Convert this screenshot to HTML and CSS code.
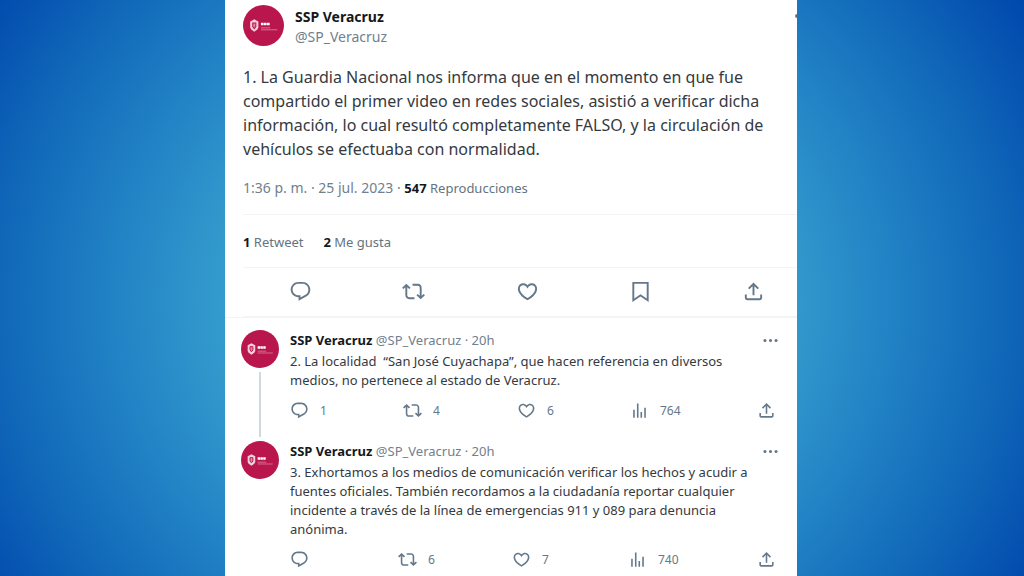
FILE: index.html
```html
<!DOCTYPE html>
<html lang="es">
<head>
<meta charset="utf-8">
<title>SSP Veracruz</title>
<link rel="stylesheet" href="styles.css">
</head>
<body>
<svg class="sprite" aria-hidden="true">
  <symbol id="reply" viewBox="0 0 24 24"><path d="M1.751 10c0-4.42 3.584-8 8.005-8h4.366c4.49 0 8.129 3.64 8.129 8.13 0 2.96-1.607 5.68-4.196 7.11l-8.054 4.46v-3.69h-.067c-4.49.1-8.183-3.51-8.183-8.01zm8.005-6c-3.317 0-6.005 2.69-6.005 6 0 3.37 2.77 6.08 6.138 6.01l.351-.01h1.761v2.3l5.087-2.81c1.951-1.08 3.163-3.13 3.163-5.36 0-3.39-2.744-6.13-6.129-6.13H9.756z"/></symbol>
  <symbol id="retweet" viewBox="0 0 24 24"><path d="M4.5 3.88l4.432 4.14-1.364 1.46L5.5 7.55V16c0 1.1.896 2 2 2H13v2H7.5c-2.209 0-4-1.79-4-4V7.55L1.432 9.48.068 8.02 4.5 3.88zM16.5 6H11V4h5.5c2.209 0 4 1.79 4 4v8.45l2.068-1.93 1.364 1.46-4.432 4.14-4.432-4.14 1.364-1.46 2.068 1.93V8c0-1.1-.896-2-2-2z"/></symbol>
  <symbol id="like" viewBox="0 0 24 24"><path d="M16.697 5.5c-1.222-.06-2.679.51-3.89 2.16l-.805 1.09-.806-1.09C9.984 6.01 8.526 5.44 7.304 5.5c-1.243.07-2.349.78-2.91 1.91-.552 1.12-.633 2.78.479 4.82 1.074 1.97 3.257 4.27 7.129 6.61 3.87-2.34 6.052-4.64 7.126-6.61 1.111-2.04 1.03-3.7.477-4.82-.561-1.13-1.666-1.84-2.908-1.91zm4.187 7.69c-1.351 2.48-4.001 5.12-8.379 7.67l-.503.3-.504-.3c-4.379-2.55-7.029-5.19-8.382-7.67-1.36-2.5-1.41-4.86-.514-6.67.887-1.79 2.647-2.91 4.601-3.01 1.651-.09 3.368.56 4.798 2.01 1.429-1.45 3.146-2.1 4.796-2.01 1.954.1 3.714 1.22 4.601 3.01.896 1.81.846 4.17-.514 6.67z"/></symbol>
  <symbol id="views" viewBox="0 0 24 24"><path d="M8.75 21V3h2v18h-2zM18 21V8.5h2V21h-2zM4 21l.004-10h2L6 21H4zm9.248 0v-7h2v7h-2z"/></symbol>
  <symbol id="bookmark" viewBox="0 0 24 24"><path d="M3.500 2h17v20.940l-8.500-5.710-8.500 5.710zM5.500 4v15.200l6.500-4.430 6.500 4.430V4z"/></symbol>
  <symbol id="share" viewBox="0 0 24 24"><path d="M12 2.590l5.700 5.700-1.410 1.420L13 6.410V16h-2V6.410l-3.300 3.300-1.410-1.420L12 2.590zM21 15l-.02 3.510c0 1.380-1.120 2.490-2.500 2.490H5.500C4.110 21 3 19.880 3 18.500V15h2v3.500c0 .28.22.5.5.5h12.980c.28 0 .5-.22.5-.5L19 15h2z"/></symbol>
  <symbol id="more" viewBox="0 0 24 24"><path d="M3 12c0-1.100.9-2 2-2s2 .9 2 2-.9 2-2 2-2-.9-2-2zm9 2c1.100 0 2-.9 2-2s-.9-2-2-2-2 .9-2 2 .9 2 2 2zm7 0c1.100 0 2-.9 2-2s-.9-2-2-2-2 .9-2 2 .9 2 2 2z"/></symbol>
  <symbol id="avatar" viewBox="0 0 40 40">
    <circle cx="20" cy="20" r="20" fill="#b9164e"/>
    <path d="M7 16l2-1 2-1 2 1 2 1v6l-1 2-3 2-3-2-1-2z" fill="#f3cfdb"/>
    <path d="M9.500 17.500h3v3.500l-1.500 2-1.500-2z" fill="#dd86a4" stroke="#b9164e"/>
    <path d="M17.500 18.500h8.500" stroke="#fff" stroke-width="2.600" stroke-dasharray="2.600 .35"/>
    <path d="M17.500 22.300h9M17.500 24.200h16" stroke="#d9799a" stroke-width=".9"/>
  </symbol>
</svg>
<main class="panel">
  <article class="main-tweet">
    <header class="author">
      <svg class="avatar-large" role="img" aria-label="SSP Veracruz"><use href="#avatar"/></svg>
      <div class="author-names">
        <a class="name" href="#perfil">SSP Veracruz</a>
        <a class="handle" href="#perfil">@SP_Veracruz</a>
      </div>
      <button class="more-cut" aria-label="Más opciones"><span class="dot"></span></button>
    </header>
    <p class="main-text">1. La Guardia Nacional nos informa que en el momento en que fue<br>compartido el primer video en redes sociales, asistió a verificar dicha<br>información, lo cual resultó completamente FALSO, y la circulación de<br>vehículos se efectuaba con normalidad.</p>
    <p class="meta"><time>1:36 p. m. · 25 jul. 2023</time> · <span class="stat"><b>547</b> Reproducciones</span></p>
    <div class="stats">
      <a class="stat" href="#retweets"><b>1</b> Retweet</a>
      <a class="stat" href="#likes"><b>2</b> Me gusta</a>
    </div>
    <div class="main-actions">
      <button aria-label="Responder"><svg class="icon"><use href="#reply"/></svg></button>
      <button aria-label="Retwittear"><svg class="icon"><use href="#retweet"/></svg></button>
      <button aria-label="Me gusta"><svg class="icon"><use href="#like"/></svg></button>
      <button aria-label="Guardar"><svg class="icon"><use href="#bookmark"/></svg></button>
      <button aria-label="Compartir"><svg class="icon"><use href="#share"/></svg></button>
    </div>
  </article>
  <section class="thread">
    <article class="tweet">
      <div class="rail">
        <svg class="avatar" role="img" aria-label="SSP Veracruz"><use href="#avatar"/></svg>
        <span class="line"></span>
      </div>
      <div class="body">
        <header class="byline">
          <span><a class="name" href="#perfil">SSP Veracruz</a> <a class="handle" href="#perfil">@SP_Veracruz</a> <span class="handle">· 20h</span></span>
          <button aria-label="Más opciones"><svg class="icon"><use href="#more"/></svg></button>
        </header>
        <p class="text">2. La localidad&nbsp; “San José Cuyachapa”, que hacen referencia en diversos<br>medios, no pertenece al estado de Veracruz.</p>
        <div class="actions">
          <button aria-label="Responder"><svg class="icon"><use href="#reply"/></svg><span>1</span></button>
          <button aria-label="Retwittear"><svg class="icon"><use href="#retweet"/></svg><span>4</span></button>
          <button aria-label="Me gusta"><svg class="icon"><use href="#like"/></svg><span>6</span></button>
          <button aria-label="Vistas"><svg class="icon"><use href="#views"/></svg><span>764</span></button>
          <button aria-label="Compartir"><svg class="icon"><use href="#share"/></svg></button>
        </div>
      </div>
    </article>
    <article class="tweet">
      <div class="rail">
        <svg class="avatar" role="img" aria-label="SSP Veracruz"><use href="#avatar"/></svg>
      </div>
      <div class="body">
        <header class="byline">
          <span><a class="name" href="#perfil">SSP Veracruz</a> <a class="handle" href="#perfil">@SP_Veracruz</a> <span class="handle">· 20h</span></span>
          <button aria-label="Más opciones"><svg class="icon"><use href="#more"/></svg></button>
        </header>
        <p class="text">3. Exhortamos a los medios de comunicación verificar los hechos y acudir a<br>fuentes oficiales. También recordamos a la ciudadanía reportar cualquier<br>incidente a través de la línea de emergencias 911 y 089 para denuncia<br>anónima.</p>
        <div class="actions no-replies">
          <button aria-label="Responder"><svg class="icon"><use href="#reply"/></svg></button>
          <button aria-label="Retwittear"><svg class="icon"><use href="#retweet"/></svg><span>6</span></button>
          <button aria-label="Me gusta"><svg class="icon"><use href="#like"/></svg><span>7</span></button>
          <button aria-label="Vistas"><svg class="icon"><use href="#views"/></svg><span>740</span></button>
          <button aria-label="Compartir"><svg class="icon"><use href="#share"/></svg></button>
        </div>
      </div>
    </article>
  </section>
</main>
</body>
</html>
```
FILE: styles.css
```css
* {
  box-sizing: border-box;
}

body {
  margin: 0;
  min-height: 100vh;
  padding: 0 227px 0 225px;
  background: radial-gradient(ellipse 60% 95% at 49% 51%, #5cc8e0 0%, #349ccd 45%, #2080c4 65%, #1067b8 82%, #0048ad 100%);
  font-family: "Noto Sans", "Open Sans", sans-serif;
  font-size: 14px;
  color: #343a40;
}

p {
  margin: 0;
}

a {
  color: inherit;
  text-decoration: none;
}

button {
  display: flex;
  align-items: center;
  padding: 0;
  border: 0;
  background: none;
  color: #64788a;
  font: inherit;
}

.sprite {
  display: none;
}

.icon {
  display: block;
  flex: none;
  width: 19px;
  height: 19px;
  fill: #64788a;
}

.panel {
  min-height: 100vh;
  background: #fff;
}

.main-tweet {
  padding: 5px 0 0 18px;
  border-bottom: 1px solid #f1f5f6;
}

.author {
  display: flex;
  height: 42px;
}

.avatar-large {
  flex: none;
  width: 41px;
  height: 41px;
  margin-right: 11px;
}

.author-names {
  display: flex;
  flex: 1;
  flex-direction: column;
  padding-top: 2px;
  line-height: 20px;
}

.name {
  color: #14181c;
  font-weight: 700;
}

.handle {
  color: #71808d;
}

.more-cut {
  width: 2px;
  height: 22px;
  overflow: hidden;
}

.dot {
  flex: none;
  width: 4px;
  height: 4px;
  border-radius: 50%;
  background: #64788a;
}

.main-text {
  padding-top: 18px;
  font-size: 16px;
  line-height: 24px;
  white-space: nowrap;
}

.meta {
  padding: 17px 0 16px;
  border-bottom: 1px solid #f1f5f6;
  color: #71808d;
  line-height: 20px;
}

.stat {
  color: #64737f;
  font-size: 13px;
}

.stat b {
  color: #14181c;
}

.stats {
  display: flex;
  gap: 20px;
  padding: 17px 0 15px;
  border-bottom: 1px solid #f1f5f6;
  line-height: 20px;
}

.main-actions {
  display: flex;
  justify-content: space-between;
  padding: 12px 32px 13px 46px;
  border-bottom: 1px solid #f1f5f6;
}

.main-actions .icon {
  width: 23px;
  height: 23px;
}

.thread {
  padding: 12px 20px 0 16px;
  font-size: 13px;
}

.tweet {
  display: flex;
  gap: 11px;
}

.rail {
  display: flex;
  flex: none;
  flex-direction: column;
  align-items: center;
  width: 38px;
}

.avatar {
  width: 38px;
  height: 38px;
}

.line {
  flex: 1;
  width: 2px;
  margin: 4px 0;
  background: #cfd9de;
}

.body {
  flex: 1;
  min-width: 0;
}

.byline {
  display: flex;
  align-items: center;
  justify-content: space-between;
  height: 20px;
  margin-right: -3px;
}

.text {
  padding-top: 2px;
  line-height: 19px;
  white-space: nowrap;
}

.actions {
  display: grid;
  grid-template-columns: 113fr 114fr 113fr 127fr 19px;
  padding: 11px 1px 21px 0;
  font-size: 12px;
}

.actions button {
  gap: 11px;
  height: 19px;
}

.no-replies {
  grid-template-columns: 108fr 114fr 116fr 129fr 19px;
}
```
